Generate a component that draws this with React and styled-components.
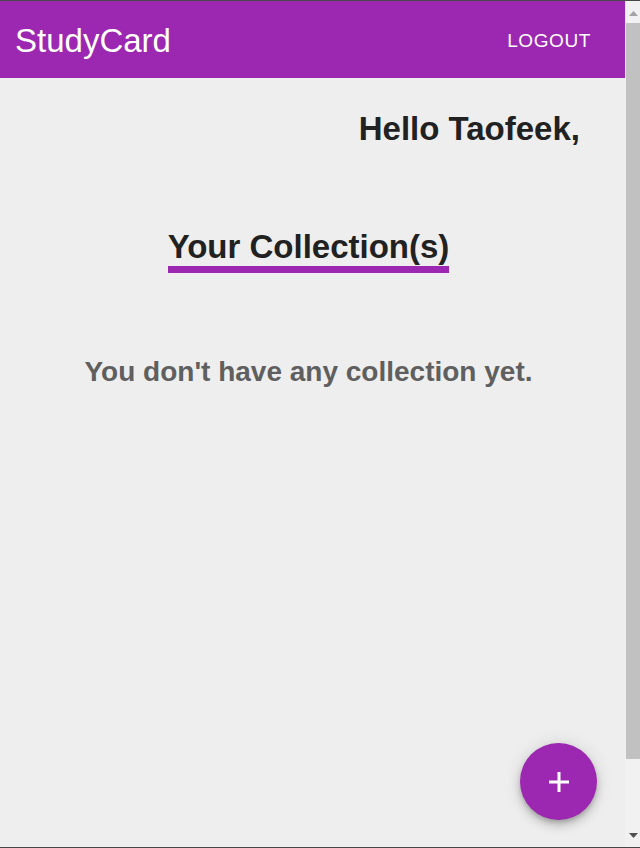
import React from 'react'
import styled, { createGlobalStyle } from 'styled-components'

const GlobalStyle = createGlobalStyle`
    html, body {
        margin: 0;
        padding: 0;
        background: #eeeeee;
        font-family: "Liberation Sans", Arial, sans-serif;
        overflow: hidden;
    }
`

const Shell = styled.div`
    display: flex;
    height: 100vh;
    box-sizing: border-box;
    border-top: 1px solid #474747;
    border-bottom: 1px solid #474747;
`

const Main = styled.main`
    flex: 1;
    position: relative;
    overflow: hidden;
    background: #eeeeee;
`

const AppBar = styled.header`
    height: 77px;
    background: #9c27b0;
    display: flex;
    align-items: center;
    justify-content: space-between;
    padding: 0 34px 0 15px;
    box-sizing: border-box;
`

const Brand = styled.div`
    color: #ffffff;
    font-size: 33px;
    line-height: 1;
    padding-top: 1px;
`

const LogoutButton = styled.button`
    background: none;
    border: none;
    padding: 3px 0 0;
    color: #ffffff;
    font-family: inherit;
    font-size: 19px;
    letter-spacing: 0.6px;
    text-transform: uppercase;
    cursor: pointer;
`

const Greeting = styled.h2`
    margin: 32px 45px 0 0;
    text-align: right;
    font-size: 33px;
    line-height: 38px;
    font-weight: 700;
    color: #212121;
`

const HeadingRow = styled.div`
    display: flex;
    justify-content: center;
    margin-top: 80px;
    padding-right: 8px;
`

const Heading = styled.h3`
    margin: 0;
    font-size: 33px;
    line-height: 38px;
    font-weight: 700;
    color: #212121;
    padding-bottom: 0;
    border-bottom: 7px solid #9c27b0;
`

const Empty = styled.p`
    margin: 82px 8px 0 0;
    text-align: center;
    font-size: 28px;
    line-height: 34px;
    font-weight: 700;
    color: #5f5f5f;
`

const Fab = styled.button`
    position: absolute;
    right: 28px;
    bottom: 27px;
    width: 77px;
    height: 77px;
    border-radius: 50%;
    border: none;
    background: #9c27b0;
    display: flex;
    align-items: center;
    justify-content: center;
    box-shadow: 0 3px 5px -1px rgba(0, 0, 0, 0.2), 0 6px 10px 0 rgba(0, 0, 0, 0.14), 0 1px 18px 0 rgba(0, 0, 0, 0.12);
    cursor: pointer;
`

const Rail = styled.div`
    width: 15px;
    display: flex;
    flex-direction: column;
    background: #f1f1f1;
`

const RailButton = styled.div`
    height: 17px;
    display: flex;
    justify-content: center;
    align-items: ${(p) => (p.$down ? 'flex-start' : 'flex-end')};
    padding: ${(p) => (p.$down ? '3px 0 0 1px' : '0 0 2px 1px')};
    box-sizing: border-box;
`

const Track = styled.div`
    flex: 1;
    padding: 5px 0 0 1px;
`

const Thumb = styled.div`
    height: 736px;
    background: #c1c1c1;
`

const Arrow = ({ down }) => (
    <svg width="9" height="5" viewBox="0 0 9 5">
        {down
            ? <polygon points="0,0 9,0 4.5,5" fill="#505050" />
            : <polygon points="0,5 9,5 4.5,0" fill="#a3a3a3" />}
    </svg>
)

const App = () => {
    return (
        <Shell>
            <GlobalStyle />
            <Main>
                <AppBar>
                    <Brand>StudyCard</Brand>
                    <LogoutButton>Logout</LogoutButton>
                </AppBar>

                <Greeting>Hello Taofeek,</Greeting>

                <HeadingRow>
                    <Heading>Your Collection(s)</Heading>
                </HeadingRow>

                <Empty>You don't have any collection yet.</Empty>

                <Fab aria-label="add">
                    <svg width="22" height="22" viewBox="0 0 22 22">
                        <path d="M11 1v20M1 11h20" stroke="#ffffff" strokeWidth="3" />
                    </svg>
                </Fab>
            </Main>

            <Rail>
                <RailButton><Arrow /></RailButton>
                <Track><Thumb /></Track>
                <RailButton $down><Arrow down /></RailButton>
            </Rail>
        </Shell>
    )
}

export default App
